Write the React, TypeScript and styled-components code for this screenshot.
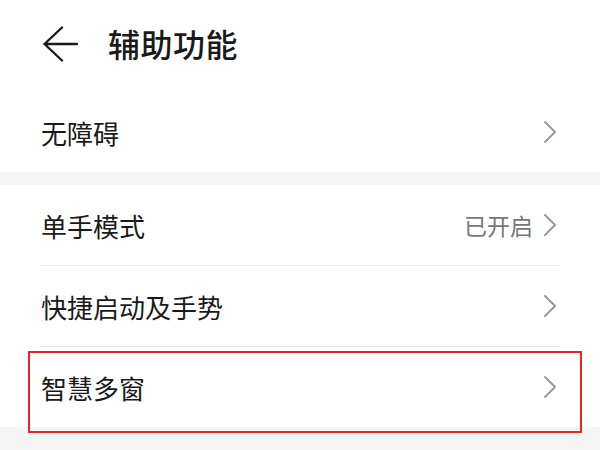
import React from 'react';
import styled, {createGlobalStyle} from 'styled-components';

const GlobalStyle = createGlobalStyle`
  html, body {
    margin: 0;
    padding: 0;
    background: #f5f5f5;
  }
  body {
    font-family: "Noto Sans CJK SC", "Noto Sans", sans-serif;
    -webkit-font-smoothing: antialiased;
  }
`;

interface SettingItem {
  label: string;
  value?: string;
  highlighted?: boolean;
}

const groups: SettingItem[][] = [
  [{label: '无障碍'}],
  [
    {label: '单手模式', value: '已开启'},
    {label: '快捷启动及手势'},
    {label: '智慧多窗', highlighted: true},
  ],
];

const BackArrow = () => (
  <svg width="36" height="36" viewBox="0 0 36 36" fill="none">
    <path
      d="M20 1.5L2.5 18L20 34.5M2.5 18H35"
      stroke="#1a1a1a"
      strokeWidth="2.4"
      strokeLinecap="round"
      strokeLinejoin="round"
    />
  </svg>
);

const Chevron = () => (
  <svg width="14" height="24" viewBox="0 0 14 24" fill="none">
    <path
      d="M2 2L12 12L2 22"
      stroke="#9a9a9a"
      strokeWidth="2"
      strokeLinecap="round"
      strokeLinejoin="round"
    />
  </svg>
);

const App = () => (
  <>
    <GlobalStyle />
    <Page>
      <Header>
        <BackButton aria-label="返回">
          <BackArrow />
        </BackButton>
        <Title>辅助功能</Title>
      </Header>
      {groups.map((group, gi) => (
        <Group key={gi}>
          {group.map((item, i) => (
            <Row key={item.label} $last={i === group.length - 1}>
              <Label>{item.label}</Label>
              <Trailing>
                {item.value && <Value>{item.value}</Value>}
                <Chevron />
              </Trailing>
              {item.highlighted && <Highlight />}
            </Row>
          ))}
        </Group>
      ))}
    </Page>
  </>
);

const Page = styled.div`
  width: 600px;
  height: 450px;
  overflow: hidden;
  display: flex;
  flex-direction: column;
  gap: 13px;
  background: #f5f5f5;
`;

const Header = styled.div`
  display: flex;
  align-items: center;
  height: 92px;
  padding: 0 0 0 42px;
  background: #ffffff;
  margin-bottom: -13px;
`;

const BackButton = styled.button`
  display: flex;
  align-items: center;
  justify-content: center;
  padding: 0;
  margin: 0 30px 4px 0;
  border: none;
  background: none;
`;

const Title = styled.h1`
  margin: 0 0 6px;
  font-size: 32px;
  font-weight: 500;
  color: #1a1a1a;
  letter-spacing: 0.5px;
`;

const Group = styled.div`
  display: flex;
  flex-direction: column;
  background: #ffffff;
  padding: 0 40px;
`;

const Row = styled.div<{$last: boolean}>`
  position: relative;
  display: flex;
  align-items: center;
  justify-content: space-between;
  height: 80px;
  border-bottom: ${({$last}) => ($last ? 'none' : '1px solid #e8e8e8')};
`;

const Label = styled.span`
  font-size: 26px;
  color: #1a1a1a;
  padding-left: 1px;
`;

const Trailing = styled.div`
  display: flex;
  align-items: center;
  gap: 10px;
  margin-right: 3px;
`;

const Value = styled.span`
  font-size: 23px;
  color: #777777;
`;

const Highlight = styled.div`
  position: absolute;
  top: 4px;
  left: -12px;
  right: -22px;
  bottom: -6px;
  border: 2px solid #e3262b;
  pointer-events: none;
`;

export default App;
